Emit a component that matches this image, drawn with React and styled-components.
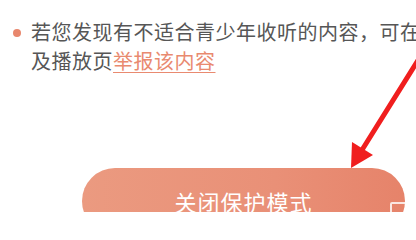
import styled, { createGlobalStyle } from 'styled-components';

const GlobalStyle = createGlobalStyle`
  html, body {
    margin: 0;
    padding: 0;
    background: #ffffff;
  }
  body {
    font-family: "Noto Sans CJK SC", "Noto Sans", sans-serif;
  }
`;

const Page = styled.div`
  position: relative;
  width: 416px;
  height: 212px;
  overflow: hidden;
  background: #ffffff;
`;

const Notice = styled.div`
  display: flex;
  align-items: flex-start;
  gap: 10px;
  padding: 17px 0 0 13px;
`;

const Dot = styled.span`
  flex: none;
  width: 8px;
  height: 8px;
  margin-top: 12px;
  border-radius: 50%;
  background: #e8876d;
`;

const NoticeText = styled.div`
  display: flex;
  flex-direction: column;
  font-size: 20px;
  line-height: 29px;
  letter-spacing: 0.5px;
  color: #565656;
`;

const Line = styled.span`
  white-space: nowrap;
`;

const Link = styled.a`
  color: #e98a70;
  text-decoration: underline;
  text-decoration-thickness: 1px;
  text-underline-offset: 3px;
`;

const Footer = styled.div`
  display: flex;
  justify-content: flex-end;
  padding: 93px 11px 0 0;
`;

const Button = styled.button`
  flex: none;
  width: 323px;
  height: 66px;
  border: none;
  border-radius: 33px;
  background: linear-gradient(90deg, #eb9a80 0%, #e99077 60%, #e6836a 100%);
  color: #ffffff;
  font-family: "Noto Sans CJK SC", sans-serif;
  font-size: 22px;
  letter-spacing: 1px;
  padding: 0;
`;

const Overlay = styled.svg`
  position: absolute;
  inset: 0;
  pointer-events: none;
`;

const Watermark = styled.span`
  position: absolute;
  right: 8px;
  bottom: -4px;
  width: 14px;
  height: 10px;
  border: 2px solid rgba(255, 255, 255, 0.8);
  border-radius: 2px;
`;

export default function App() {
  return (
    <Page>
      <GlobalStyle />
      <Notice>
        <Dot />
        <NoticeText>
          <Line>若您发现有不适合青少年收听的内容，可在详情页</Line>
          <Line>及播放页<Link>举报该内容</Link></Line>
        </NoticeText>
      </Notice>
      <Footer>
        <Button>关闭保护模式</Button>
      </Footer>
      <Watermark />
      <Overlay width="416" height="212" viewBox="0 0 416 212">
        <line x1="440" y1="25" x2="362" y2="150" stroke="#f01e1e" strokeWidth="5" strokeLinecap="round" />
        <polygon points="351,168 352,142 373,155" fill="#f01e1e" />
      </Overlay>
    </Page>
  );
}
